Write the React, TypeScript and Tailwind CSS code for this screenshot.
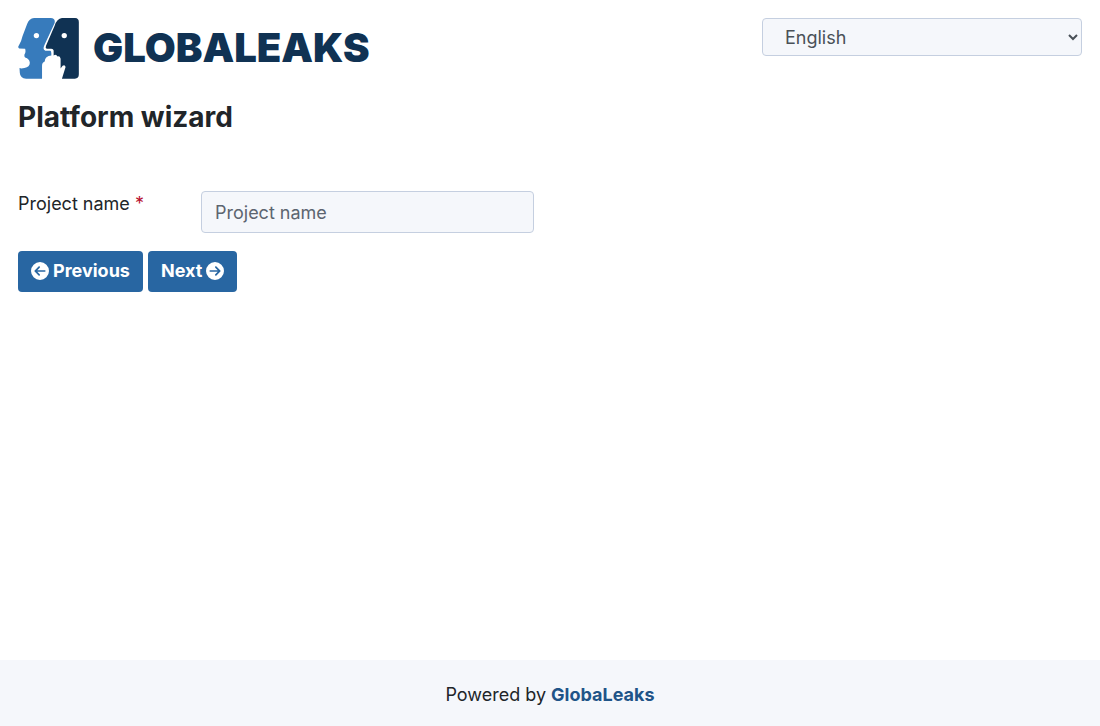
import { FaCircleArrowLeft, FaCircleArrowRight } from "react-icons/fa6";

function Logo() {
  return (
    <a href="#" aria-label="GLOBALEAKS" className="flex items-center gap-[13px]">
      <svg viewBox="24 24 186 184" className="h-[61px] w-[62px] shrink-0" aria-hidden="true">
        <path
          fill="#377bbc"
          d="M72 24H122Q137 25 134 39L103 106Q97 120 106 123H121Q124 124 124 130V137Q105 138 104 155Q96 158 96 168V207H48Q30 206 29 190L28 175Q33 178 43 175Q60 171 59 158Q58 147 45 143Q42 141 43 134Q48 128 45 117L27 116Q22 113 26 107Q34 94 37 79L51 42Q57 26 72 24Z"
        />
        <path
          fill="#103253"
          d="M156 24H196Q207 25 207 36V194Q207 207 195 207H156L167 172Q165 163 158 168L152 176V147Q150 138 143 140Q138 132 131 137V122Q130 117 124 117H110Q105 115 108 108L134 47Q141 26 156 24Z"
        />
        <circle cx="79" cy="77" r="8" fill="#fff" />
        <circle cx="163" cy="77" r="8" fill="#fff" />
      </svg>
      <span className="pb-[2px] text-[40px] leading-none font-black text-[#103253]">GLOBALEAKS</span>
    </a>
  );
}

const buttonClass =
  "flex h-[41px] items-center gap-1 rounded-sm bg-[#2866a2] px-[13px] pb-px font-bold text-white hover:bg-[#1f5488]";

export default function App() {
  return (
    <div className="flex min-h-screen flex-col bg-white font-['Inter',sans-serif] text-[18px] leading-[26px] text-[#212529]">
      <header className="flex items-start justify-between px-[18px] pt-[18px]">
        <Logo />
        <select
          aria-label="Language"
          defaultValue="en"
          className="h-[38px] w-80 rounded-sm border border-[#c5cfe0] bg-[#f5f7fb] pl-[18px] text-[#495057]"
        >
          <option value="en">English</option>
        </select>
      </header>
      <main className="grow px-[18px] pt-5">
        <h1 className="text-[28px] leading-[36px] font-bold">Platform wizard</h1>
        <form className="pt-14" onSubmit={(e) => e.preventDefault()}>
          <div className="grid w-1/2 grid-cols-[183px_1fr] items-start pr-4">
            <label htmlFor="project-name">
              Project name <span className="text-[#b8102f]">*</span>
            </label>
            <input
              id="project-name"
              type="text"
              required
              placeholder="Project name"
              className="h-[42px] w-full rounded-sm border border-[#c5cfe0] bg-[#f5f7fb] px-[13px] placeholder:text-[#5c6570]"
            />
          </div>
          <div className="flex gap-[5px] pt-[18px]">
            <button type="button" className={buttonClass}>
              <FaCircleArrowLeft aria-hidden="true" />
              Previous
            </button>
            <button type="submit" className={buttonClass}>
              Next
              <FaCircleArrowRight aria-hidden="true" />
            </button>
          </div>
        </form>
      </main>
      <footer className="flex h-[66px] items-center justify-center bg-[#f5f7fb] pt-1">
        <p>
          Powered by{" "}
          <a href="#" className="font-bold text-[#1f5488]">
            GlobaLeaks
          </a>
        </p>
      </footer>
    </div>
  );
}
